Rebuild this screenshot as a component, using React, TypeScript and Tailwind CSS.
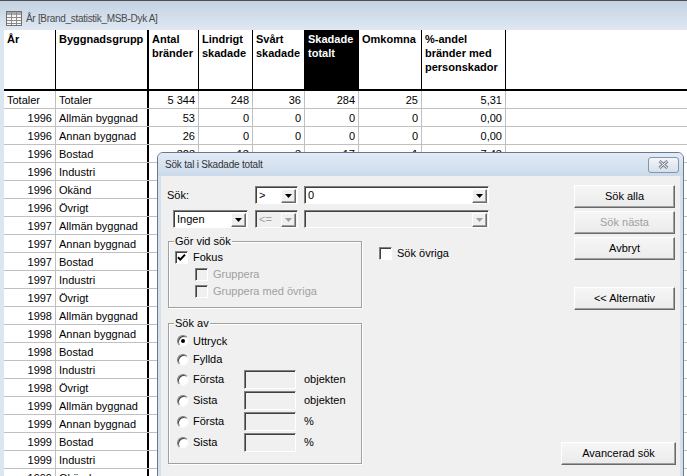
import React from 'react';

const colW = ['w-[52px]', 'w-[93px]', 'w-[50px]', 'w-[54px]', 'w-[52px]', 'w-[54px]', 'w-[63px]', 'w-[84px]'];

const headers: React.ReactNode[] = [
  'År',
  'Byggnadsgrupp',
  <>Antal<br />bränder</>,
  <>Lindrigt<br />skadade</>,
  <>Svårt<br />skadade</>,
  <>Skadade<br />totalt</>,
  'Omkomna',
  <>%-andel<br />bränder med<br />personskador</>,
];

const groups = ['Allmän byggnad', 'Annan byggnad', 'Bostad', 'Industri', 'Okänd', 'Övrigt'];

const rows: string[][] = [
  ['Totaler', 'Totaler', '5 344', '248', '36', '284', '25', '5,31'],
  ['1996', 'Allmän byggnad', '53', '0', '0', '0', '0', '0,00'],
  ['1996', 'Annan byggnad', '26', '0', '0', '0', '0', '0,00'],
  ['1996', 'Bostad', '323', '13', '3', '17', '1', '7,43'],
  ['1996', 'Industri', '98', '2', '1', '3', '0', '2,04'],
  ['1996', 'Okänd', '4', '0', '0', '0', '0', '0,00'],
  ['1996', 'Övrigt', '61', '1', '0', '1', '0', '1,64'],
  ...['Allmän byggnad', 'Annan byggnad', 'Bostad', 'Industri', 'Övrigt'].map((g) => ['1997', g, '40', '1', '0', '1', '0', '2,50']),
  ...['Allmän byggnad', 'Annan byggnad', 'Bostad', 'Industri', 'Övrigt'].map((g) => ['1998', g, '42', '1', '0', '1', '0', '2,38']),
  ...groups.map((g) => ['1999', g, '44', '1', '0', '1', '0', '2,27']),
];

function Arrow({ disabled }: { disabled?: boolean }) {
  return (
    <svg width="7" height="4" viewBox="0 0 7 4">
      <path d="M0 0h7L3.5 4z" fill={disabled ? '#a0a0a0' : '#000'} />
    </svg>
  );
}

function Combo({ value, w, disabled }: { value: string; w: string; disabled?: boolean }) {
  return (
    <div
      className={`${w} h-[18px] flex items-center border border-t-[#808080] border-l-[#808080] border-r-white border-b-white shadow-[inset_1px_1px_0_#404040] ${
        disabled ? 'bg-[#f0f0f0] text-[#a0a0a0]' : 'bg-white text-black'
      }`}
    >
      <span className="flex-1 pl-[3px] leading-[14px]">{value}</span>
      <div className="w-[15px] h-[14px] mr-[1px] mt-[1px] flex items-center justify-center bg-[#f0f0f0] border border-t-white border-l-white border-r-[#696969] border-b-[#696969] shadow-[inset_-1px_-1px_0_#a0a0a0]">
        <Arrow disabled={disabled} />
      </div>
    </div>
  );
}

function Check({ checked, disabled }: { checked?: boolean; disabled?: boolean }) {
  return (
    <div
      className={`w-[13px] h-[13px] shrink-0 flex items-center justify-center border border-t-[#808080] border-l-[#808080] border-r-white border-b-white shadow-[inset_1px_1px_0_#404040] ${
        disabled ? 'bg-[#f0f0f0]' : 'bg-white'
      }`}
    >
      {checked && (
        <svg width="9" height="9" viewBox="0 0 9 9">
          <path d="M1 4.2l2.3 2.4L8 1.6" stroke="#000" strokeWidth="2" fill="none" />
        </svg>
      )}
    </div>
  );
}

function Radio({ checked }: { checked?: boolean }) {
  return (
    <div className="w-[12px] h-[12px] shrink-0 rounded-full bg-white border border-t-[#808080] border-l-[#808080] border-r-[#f4f4f4] border-b-[#f4f4f4] shadow-[inset_1px_1px_0_#404040] flex items-center justify-center">
      {checked && <div className="w-[4px] h-[4px] rounded-full bg-black" />}
    </div>
  );
}

function Btn({ label, w, disabled, className = '' }: { label: string; w: string; disabled?: boolean; className?: string }) {
  return (
    <div
      className={`${w} h-[23px] flex items-center justify-center bg-gradient-to-b from-[#f6f6f6] to-[#ebebeb] border border-t-white border-l-white border-r-[#696969] border-b-[#696969] shadow-[inset_-1px_-1px_0_#a0a0a0] ${
        disabled ? 'text-[#a0a0a0]' : 'text-black'
      } ${className}`}
    >
      {label}
    </div>
  );
}

function TextBox() {
  return (
    <div className="w-[52px] h-[19px] bg-[#f0f0f0] border border-t-[#808080] border-l-[#808080] border-r-white border-b-white shadow-[inset_1px_1px_0_#404040]" />
  );
}

function Group({ label, h, children }: { label: string; h: string; children: React.ReactNode }) {
  return (
    <div className={`relative ml-[1px] w-[194px] ${h} border border-[#a0a0a0] shadow-[1px_1px_0_#fff,inset_1px_1px_0_#fff]`}>
      <span className="absolute left-[5px] -top-[7px] px-[1px] bg-[#f0f0f0] leading-[13px]">{label}</span>
      {children}
    </div>
  );
}

export default function App() {
  return (
    <div className="relative w-[687px] h-[476px] overflow-hidden bg-[#dce6f1] font-['Liberation_Sans',Arial,sans-serif] text-[11px] text-black">
      {/* window title */}
      <div className="h-[30px] border-t border-[#505050] bg-gradient-to-b from-[#c3d2e2] to-[#dfe8f3] flex items-center pl-[6px] pt-[5px]">
        <svg width="16" height="15" viewBox="0 0 16 15">
          <rect x="0.5" y="0.5" width="15" height="14" fill="#f6f6f6" stroke="#707070" />
          <rect x="1" y="1" width="14" height="3" fill="#a8a8a8" />
          <path d="M1 6.5h14M1 9.5h14M1 12.5h14M5.5 1v13M10.5 1v13" stroke="#8a8a8a" />
        </svg>
        <span className="ml-[4px] text-[10px] tracking-[-0.3px] text-[#4a4a4a]">År [Brand_statistik_MSB-Dyk A]</span>
      </div>

      <div className="flex">
        <div className="w-[4px] shrink-0" />
        <div className="flex-1 bg-white">
          {/* header */}
          <div className="h-[61px] flex border-b-2 border-black font-bold leading-[14px]">
            {headers.map((h, i) => (
              <div
                key={i}
                className={`${colW[i]} shrink-0 pl-[3px] pt-[2px] border-black ${i === 1 ? 'border-r-2' : 'border-r'} ${
                  i === 5 ? 'bg-black text-white' : ''
                }`}
              >
                {h}
              </div>
            ))}
            <div className="flex-1" />
          </div>
          {/* rows */}
          {rows.map((r, ri) => (
            <div key={ri} className="h-[18px] flex border-b border-[#c0c0c0] leading-[14px]">
              {r.map((c, ci) => (
                <div
                  key={ci}
                  className={`${colW[ci]} shrink-0 pt-[2px] px-[3px] whitespace-nowrap overflow-hidden ${
                    ci === 1 ? 'border-r-2 border-black' : 'border-r border-[#c0c0c0]'
                  } ${ci === 1 || (ci === 0 && ri === 0) ? 'text-left' : 'text-right'}`}
                >
                  {c}
                </div>
              ))}
              <div className="flex-1" />
            </div>
          ))}
        </div>
      </div>

      {/* dialog */}
      <div className="absolute left-[157px] top-[152px] w-[527px] h-[330px] flex flex-col border border-[#6b7888] rounded-t-[6px] bg-[#d4e0ed] overflow-hidden">
        <div className="h-[23px] shrink-0 flex items-center justify-between pl-[7px] pr-[4px] bg-gradient-to-b from-[#e2ebf6] to-[#cbdaeb]">
          <span className="text-[10px] tracking-[-0.2px] text-[#333]">Sök tal i Skadade totalt</span>
          <div className="w-[31px] h-[16px] rounded-[3px] border border-[#8794a5] bg-gradient-to-b from-[#f3f6fa] to-[#d7e0ea] flex items-center justify-center">
            <svg width="11" height="9" viewBox="0 0 11 9">
              <path d="M1.5 1l8 7M9.5 1l-8 7" stroke="#7b8796" strokeWidth="3" />
              <path d="M1.5 1l8 7M9.5 1l-8 7" stroke="#fff" strokeWidth="1" />
            </svg>
          </div>
        </div>

        <div className="flex-1 mx-[3px] bg-[#f0f0f0] flex">
          {/* left side */}
          <div className="flex-1 pl-[6px]">
            <div className="mt-[10px] h-[18px] flex items-center">
              <span className="w-[88px]">Sök:</span>
              <Combo value=">" w="w-[43px]" />
              <div className="ml-[6px]">
                <Combo value="0" w="w-[185px]" />
              </div>
            </div>
            <div className="mt-[6px] h-[18px] flex items-center">
              <div className="ml-[6px]">
                <Combo value="Ingen" w="w-[75px]" />
              </div>
              <div className="ml-[7px]">
                <Combo value="<=" w="w-[43px]" disabled />
              </div>
              <div className="ml-[6px]">
                <Combo value="" w="w-[185px]" disabled />
              </div>
            </div>

            <div className="mt-[13px] flex items-start">
              <Group label="Gör vid sök" h="h-[67px]">
                <div className="pl-[6px] pt-[9px] flex flex-col gap-[4px]">
                  <div className="h-[13px] flex items-center">
                    <Check checked />
                    <span className="ml-[5px]">Fokus</span>
                  </div>
                  <div className="h-[13px] flex items-center ml-[20px] text-[#a0a0a0]">
                    <Check disabled />
                    <span className="ml-[5px]">Gruppera</span>
                  </div>
                  <div className="h-[13px] flex items-center ml-[20px] text-[#a0a0a0]">
                    <Check disabled />
                    <span className="ml-[5px]">Gruppera med övriga</span>
                  </div>
                </div>
              </Group>
              <div className="ml-[17px] mt-[6px] h-[13px] flex items-center">
                <Check />
                <span className="ml-[5px]">Sök övriga</span>
              </div>
            </div>

            <div className="mt-[15px]">
              <Group label="Sök av" h="h-[141px]">
                <div className="pl-[8px] pt-[8px] flex flex-col">
                  <div className="h-[18px] flex items-center">
                    <Radio checked />
                    <span className="ml-[4px]">Uttryck</span>
                  </div>
                  <div className="h-[19px] flex items-center">
                    <Radio />
                    <span className="ml-[4px]">Fyllda</span>
                  </div>
                  {[
                    ['Första', 'objekten'],
                    ['Sista', 'objekten'],
                    ['Första', '%'],
                    ['Sista', '%'],
                  ].map(([a, b], i) => (
                    <div key={i} className="h-[21px] flex items-center">
                      <Radio />
                      <span className="ml-[4px] w-[51px]">{a}</span>
                      <TextBox />
                      <span className="ml-[8px]">{b}</span>
                    </div>
                  ))}
                </div>
              </Group>
            </div>
          </div>

          {/* buttons */}
          <div className="w-[115px] mr-[4px] flex flex-col items-end">
            <Btn label="Sök alla" w="w-[101px]" className="mt-[9px] mr-[1px]" />
            <Btn label="Sök nästa" w="w-[101px]" disabled className="mt-[3px] mr-[1px]" />
            <Btn label="Avbryt" w="w-[101px]" className="mt-[3px] mr-[1px]" />
            <Btn label="<< Alternativ" w="w-[101px]" className="mt-[27px] mr-[1px]" />
            <Btn label="Avancerad sök" w="w-[115px]" className="mt-[132px]" />
          </div>
        </div>
      </div>
    </div>
  );
}
